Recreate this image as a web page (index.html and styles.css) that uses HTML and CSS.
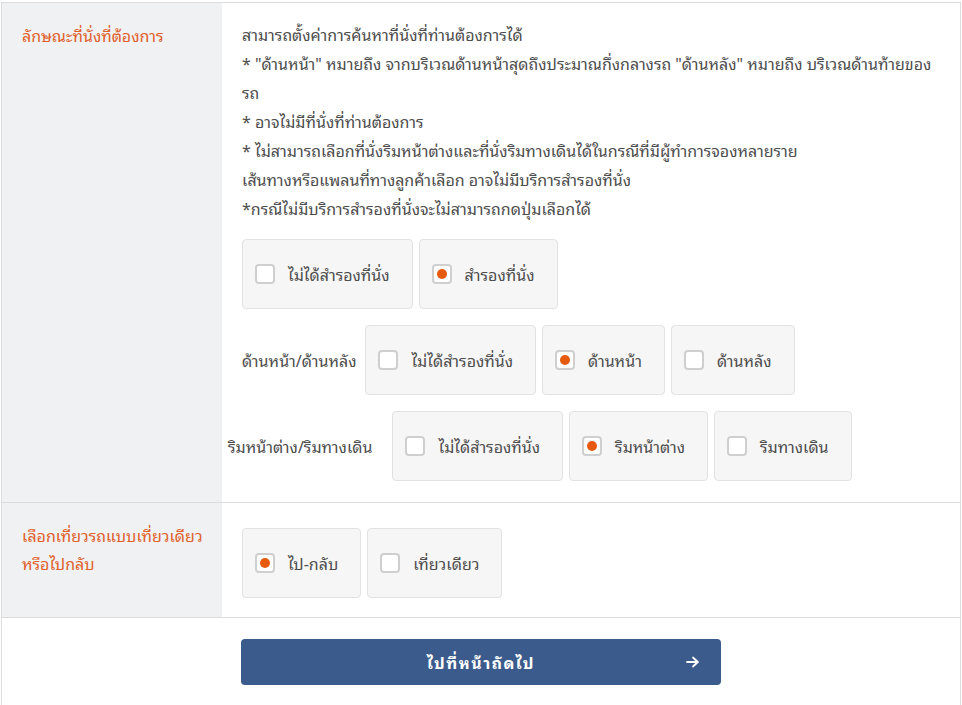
FILE: index.html
```html
<!DOCTYPE html>
<html lang="th">
<head>
<meta charset="utf-8">
<link rel="stylesheet" href="styles.css">
</head>
<body>
<div class="wrap">
  <div class="row">
    <div class="head">ลักษณะที่นั่งที่ต้องการ</div>
    <div class="body">
      <div class="note">
        <p>สามารถตั้งค่าการค้นหาที่นั่งที่ท่านต้องการได้</p>
        <p>* "ด้านหน้า" หมายถึง จากบริเวณด้านหน้าสุดถึงประมาณกึ่งกลางรถ "ด้านหลัง" หมายถึง บริเวณด้านท้ายของรถ</p>
        <p>* อาจไม่มีที่นั่งที่ท่านต้องการ</p>
        <p>* ไม่สามารถเลือกที่นั่งริมหน้าต่างและที่นั่งริมทางเดินได้ในกรณีที่มีผู้ทำการจองหลายราย</p>
        <p>เส้นทางหรือแพลนที่ทางลูกค้าเลือก อาจไม่มีบริการสำรองที่นั่ง</p>
        <p>*กรณีไม่มีบริการสำรองที่นั่งจะไม่สามารถกดปุ่มเลือกได้</p>
      </div>
      <div class="opts first">
        <label class="opt"><span class="cb"></span>ไม่ได้สำรองที่นั่ง</label>
        <label class="opt"><span class="cb on"></span>สำรองที่นั่ง</label>
      </div>
      <div class="opts">
        <span class="olabel">ด้านหน้า/ด้านหลัง</span>
        <label class="opt"><span class="cb"></span>ไม่ได้สำรองที่นั่ง</label>
        <label class="opt"><span class="cb on"></span>ด้านหน้า</label>
        <label class="opt"><span class="cb"></span>ด้านหลัง</label>
      </div>
      <div class="opts">
        <span class="olabel shift">ริมหน้าต่าง/ริมทางเดิน</span>
        <label class="opt"><span class="cb"></span>ไม่ได้สำรองที่นั่ง</label>
        <label class="opt"><span class="cb on"></span>ริมหน้าต่าง</label>
        <label class="opt"><span class="cb"></span>ริมทางเดิน</label>
      </div>
    </div>
  </div>
  <div class="row">
    <div class="head two">เลือกเที่ยวรถแบบเที่ยวเดียว<br>หรือไปกลับ</div>
    <div class="body trip">
      <div class="opts">
        <label class="opt"><span class="cb on"></span>ไป-กลับ</label>
        <label class="opt"><span class="cb"></span>เที่ยวเดียว</label>
      </div>
    </div>
  </div>
  <div class="foot">
    <button class="next"><span class="ntext">ไปที่หน้าถัดไป</span><svg class="arrow" width="14" height="12" viewBox="0 0 14 12"><path d="M1 6h11M7 1.5 11.8 6 7 10.5" fill="none" stroke="#fff" stroke-width="1.8" stroke-linecap="round" stroke-linejoin="round"/></svg></button>
  </div>
</div>
</body>
</html>
```
FILE: styles.css
```css
html, body { margin: 0; padding: 0; background: #fff; }
body {
  padding: 2px 0 0 1px;
  font-family: Tahoma, "Noto Sans Thai Looped", "Noto Sans Thai", "Noto Sans", "DejaVu Sans", sans-serif;
  font-size: 16px;
  color: #4d4d4d;
}
.wrap {
  width: 958px;
  border: 1px solid #dcdcdc;
  border-bottom: none;
  height: 720px;
}
.row {
  display: flex;
  border-bottom: 1px solid #dcdcdc;
}
.head {
  width: 200px;
  flex: none;
  background: #eff1f3;
  color: #e0602a;
  padding: 18px 0 0 20px;
  line-height: 28px;
}
.head.two { padding-top: 18px; }
.body {
  flex: 1;
  padding: 17px 20px 21px 20px;
}
.note p {
  margin: 0;
  line-height: 29px;
}
.opts {
  display: flex;
  align-items: center;
  gap: 6px;
  margin-top: 16px;
}
.opts.first { margin-top: 16px; }
.trip { padding-top: 25px; padding-bottom: 19px; }
.trip .opts { margin-top: 0; }
.olabel { margin-right: 3px; }
.olabel.shift { margin-left: -14px; margin-right: 14px; }
.opt {
  display: flex;
  align-items: center;
  height: 68px;
  padding: 0 22px 0 12px;
  background: #f6f6f6;
  border: 1px solid #e2e2e2;
  border-radius: 4px;
}
.cb {
  width: 16px;
  height: 16px;
  border: 2px solid #cfcfcf;
  border-radius: 4px;
  background: #fff;
  margin-right: 13px;
  display: flex;
  align-items: center;
  justify-content: center;
}
.cb.on::after {
  content: "";
  width: 10px;
  height: 10px;
  border-radius: 50%;
  background: #e65a0e;
}
.foot {
  display: flex;
  padding: 21px 0 0 239px;
}
.next {
  width: 480px;
  height: 46px;
  border: none;
  border-radius: 4px;
  background: #3b5b8c;
  color: #fff;
  font-family: inherit;
  font-size: 16px;
  font-weight: bold;
  letter-spacing: 1.5px;
  display: flex;
  align-items: center;
  justify-content: center;
  position: relative;
  padding: 0;
}
.arrow { position: absolute; right: 21px; top: 17px; }
```
